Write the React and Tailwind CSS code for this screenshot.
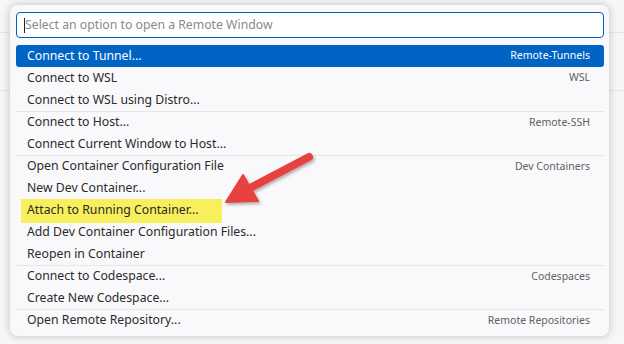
const groups = [
  [
    { label: 'Connect to Tunnel...', desc: 'Remote-Tunnels', selected: true },
  ],
  [
    { label: 'Connect to WSL', desc: 'WSL' },
    { label: 'Connect to WSL using Distro...' },
  ],
  [
    { label: 'Connect to Host...', desc: 'Remote-SSH' },
    { label: 'Connect Current Window to Host...' },
  ],
  [
    { label: 'Open Container Configuration File', desc: 'Dev Containers' },
    { label: 'New Dev Container...' },
    { label: 'Attach to Running Container...', marked: true },
    { label: 'Add Dev Container Configuration Files...' },
    { label: 'Reopen in Container' },
  ],
  [
    { label: 'Connect to Codespace...', desc: 'Codespaces' },
    { label: 'Create New Codespace...' },
  ],
  [
    { label: 'Open Remote Repository...', desc: 'Remote Repositories' },
  ],
]

function Row({ item, first }) {
  if (item.selected) {
    return (
      <div className="flex h-[22px] items-center justify-between rounded-[3px] bg-[#0064c4] pl-[11px] pr-[14px] text-white">
        <span>{item.label}</span>
        <span className="text-[10.5px]">{item.desc}</span>
      </div>
    )
  }
  return (
    <div
      className={`flex h-[22px] items-center justify-between pl-[11px] pr-[14px] ${
        first ? 'border-t border-[#e6e6e9]' : ''
      }`}
    >
      <span className="relative">
        {item.marked && (
          <span className="absolute -left-[6px] -top-[2px] h-[24px] w-[201px] bg-[#f7ef5b]" />
        )}
        <span className="relative">{item.label}</span>
      </span>
      {item.desc && <span className="text-[10.5px] text-[#616161]">{item.desc}</span>}
    </div>
  )
}

function Arrow() {
  // red annotation arrow pointing at "Attach to Running Container..."
  return (
    <svg className="pointer-events-none absolute left-0 top-0" width="624" height="344" aria-hidden="true">
      <defs>
        <filter id="sh" x="-20%" y="-20%" width="140%" height="140%">
          <feDropShadow dx="1.5" dy="2" stdDeviation="1.5" floodColor="#000" floodOpacity="0.3" />
        </filter>
      </defs>
      <g filter="url(#sh)" fill="#e8423f" stroke="#e8423f" strokeLinejoin="round">
        <line x1="309" y1="157" x2="250" y2="188" strokeWidth="8" strokeLinecap="round" />
        <polygon points="226,202 243,175 258,201" strokeWidth="2" />
      </g>
    </svg>
  )
}

export default function App() {
  return (
    <div className="relative h-[344px] w-[624px] overflow-hidden bg-[#f7f7f7] font-['Noto_Sans',sans-serif] text-[12.25px] text-[#2a2a2a]">
      <div className="h-[33px] border-b border-[#e6e6e6]" />
      <div className="h-[58px] border-b border-[#e6e6e6]" />

      <div className="absolute left-[10px] top-[5px] h-[331px] w-[599px] rounded-[8px] bg-[#f9f9fb] pb-[5px] pl-[6px] pr-[5px] pt-[7px] shadow-[0_0_8px_1px_rgba(0,0,0,0.18)]">
        <div className="flex h-[26px] items-center rounded-[4px] border border-[#005fb8] bg-white pl-[7px] text-[12.25px]">
          <span className="h-[15px] w-px bg-[#222]" />
          <span className="text-[#8a8a8a]">Select an option to open a Remote Window</span>
        </div>
        <div className="mt-[7px]">
          {groups.map((g, gi) =>
            g.map((item, i) => <Row key={gi + '-' + i} item={item} first={i === 0 && gi > 1} />)
          )}
        </div>
      </div>

      <Arrow />
    </div>
  )
}
